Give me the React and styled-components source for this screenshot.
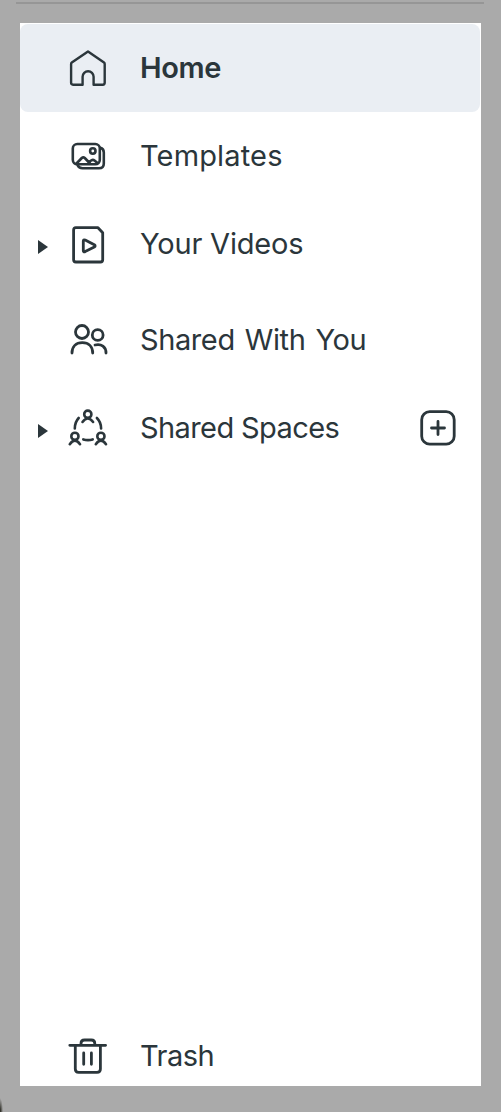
import styled, { createGlobalStyle } from 'styled-components';

const GlobalStyle = createGlobalStyle`
	* {
		box-sizing: border-box;
	}
	body {
		margin: 0;
		background: #aaaaaa;
		color: #2b363b;
		font-family: Inter, 'Liberation Sans', sans-serif;
	}
`;

const Page = styled.div`
	display: flex;
	flex-direction: column;
	height: 1112px;
	padding: 2px 20px 26px;
	background: radial-gradient(3px 14px at 0 100%, #33332c 20%, transparent) #aaaaaa;
	overflow: hidden;
`;

const Divider = styled.div`
	flex: none;
	height: 2px;
	margin: 0 -3px 19px -4px;
	background: #969696;
`;

const Panel = styled.nav`
	display: flex;
	flex: 1;
	flex-direction: column;
	justify-content: space-between;
	width: 461px;
	padding-top: 1px;
	background: #ffffff;
	overflow: hidden;
`;

const List = styled.ul`
	display: flex;
	flex-direction: column;
	margin: 0;
	padding: 0;
	list-style: none;
`;

const Footer = styled.div`
	height: 74px;
`;

const Item = styled.li`
	display: flex;
	align-items: center;
	width: 460px;
	height: 88px;
	margin-top: ${({ $gap }) => $gap || 0}px;
	padding: 0 22px 0 18px;
	border-radius: 8px;
	background: ${({ $active }) => ($active ? '#eaeef3' : 'transparent')};
`;

const ArrowSlot = styled.span`
	display: flex;
	width: 30px;
	padding-top: 6px;
`;

const Label = styled.span`
	flex: 1;
	margin-left: 32px;
	font-size: 29px;
	line-height: 40px;
	font-weight: ${({ $bold }) => ($bold ? 600 : 400)};
	letter-spacing: ${({ $spacing }) => $spacing}px;
	word-spacing: ${({ $wordSpacing }) => $wordSpacing || 0}px;
	white-space: nowrap;
`;

const AddButton = styled.button`
	display: flex;
	padding: 0;
	border: 0;
	background: none;
	color: inherit;
`;

const Svg = styled.svg`
	flex: none;
	width: 40px;
	height: 40px;
	fill: none;
	stroke: currentColor;
	stroke-width: ${({ $weight }) => $weight || 2.8};
	stroke-linecap: round;
	stroke-linejoin: round;
`;

const Arrow = () => (
	<svg width="10" height="14" viewBox="0 0 10 14" fill="currentColor">
		<path d="M0 0L10 7L0 14Z" />
	</svg>
);

const HomeIcon = () => (
	<Svg viewBox="0 0 40 40" $weight={2.4}>
		<path d="M20 3.4L36 14.6Q36.7 15.1 36.7 16V34.8Q36.7 36.7 34.8 36.7H25.6V28.8A5.5 5.5 0 0 0 14.6 28.8V36.7H5Q3.1 36.7 3.1 34.8V16Q3.1 15.1 3.8 14.6Z" />
	</Svg>
);

const TemplatesIcon = () => (
	<Svg viewBox="0 0 40 40" $weight={2.6}>
		<rect x="4.8" y="8" width="27" height="20.3" rx="4.5" />
		<path d="M32.3 11.8Q35.8 12.8 35.8 16.5V27.5Q35.8 32.3 31 32.3H14.5Q10.8 32.3 9.5 29" />
		<circle cx="24.8" cy="15" r="2.7" />
		<path d="M8.5 27.5L13.8 22Q15.3 20.6 16.8 22L22 27.5M20.5 26.5L23.5 24.3Q25 23.3 26.5 24.5L29.5 27" />
	</Svg>
);

const VideosIcon = () => (
	<Svg viewBox="0 0 40 40" $weight={2.8}>
		<path d="M7.8 3.7H30L34.7 8.7V35.8Q34.7 38 32.5 38H7.8Q5.6 38 5.6 35.8V5.9Q5.6 3.7 7.8 3.7Z" />
		<path d="M15.3 17.3Q15.3 15.2 17.2 16L26.3 20.8Q28 21.9 26.3 23L17.2 27.6Q15.3 28.4 15.3 26.5Z" />
	</Svg>
);

const PeopleIcon = () => (
	<Svg viewBox="0 0 40 40">
		<circle cx="14" cy="12" r="6.5" />
		<circle cx="29.7" cy="15" r="5.4" />
		<path d="M4 33C4 26.5 8 22.7 14.3 22.7S24.7 26.5 24.7 33" />
		<path d="M27 25C33.5 23.4 38 27 38 33" />
	</Svg>
);

const SpacesIcon = () => (
	<Svg viewBox="0 0 40 40" $weight={2.6}>
		<circle cx="19.8" cy="6.2" r="3.6" />
		<path d="M14.5 14Q19.8 7 25.1 14" />
		<circle cx="6.9" cy="28.3" r="3.6" />
		<path d="M1.8 36.2Q6.9 29 12 36.2" />
		<circle cx="32.9" cy="28.3" r="3.6" />
		<path d="M27.8 36.2Q32.9 29 38 36.2" />
		<path d="M10.7 10Q6.8 14.2 6.8 20.5M28.9 10Q33.1 14.2 33.1 20.5M15.3 31.4Q20 32.8 24.7 31.4" />
	</Svg>
);

const TrashIcon = () => (
	<Svg viewBox="0 0 40 40">
		<path d="M1.8 9.3H37.6M13 9V7.5Q13 4 16.5 4H23.3Q26.8 4 26.8 7.5V9" />
		<path d="M7.3 9.5V33Q7.3 36.4 10.7 36.4H29Q32.4 36.4 32.4 33V9.5M15.7 17V28.3M23.4 17V28.3" />
	</Svg>
);

const AddIcon = () => (
	<Svg viewBox="0 0 40 40" $weight={2.8}>
		<rect x="3.7" y="3.7" width="32.5" height="32.5" rx="8" />
		<path d="M20 13.5V26.5M13.5 20H26.5" />
	</Svg>
);

const items = [
	{ name: 'Home', icon: HomeIcon, active: true, spacing: -0.4 },
	{ name: 'Templates', icon: TemplatesIcon, spacing: 0.15 },
	{ name: 'Your Videos', icon: VideosIcon, expandable: true, spacing: -0.2 },
	{ name: 'Shared With You', icon: PeopleIcon, gap: 8, spacing: -0.4, wordSpacing: 2.3 },
	{ name: 'Shared Spaces', icon: SpacesIcon, expandable: true, addable: true, spacing: -0.6 }
];

const NavItem = ({ item, as }) => {
	const Icon = item.icon;
	return (
		<Item as={as} $active={item.active} $gap={item.gap}>
			<ArrowSlot>{item.expandable && <Arrow />}</ArrowSlot>
			<Icon />
			<Label $bold={item.active} $spacing={item.spacing} $wordSpacing={item.wordSpacing}>
				{item.name}
			</Label>
			{item.addable && (
				<AddButton aria-label="Add space">
					<AddIcon />
				</AddButton>
			)}
		</Item>
	);
};

export default function App() {
	return (
		<>
			<GlobalStyle />
			<Page>
				<Divider />
				<Panel>
					<List>
						{items.map((item) => (
							<NavItem key={item.name} item={item} />
						))}
					</List>
					<Footer>
						<NavItem as="div" item={{ name: 'Trash', icon: TrashIcon, spacing: -0.5 }} />
					</Footer>
				</Panel>
			</Page>
		</>
	);
}
